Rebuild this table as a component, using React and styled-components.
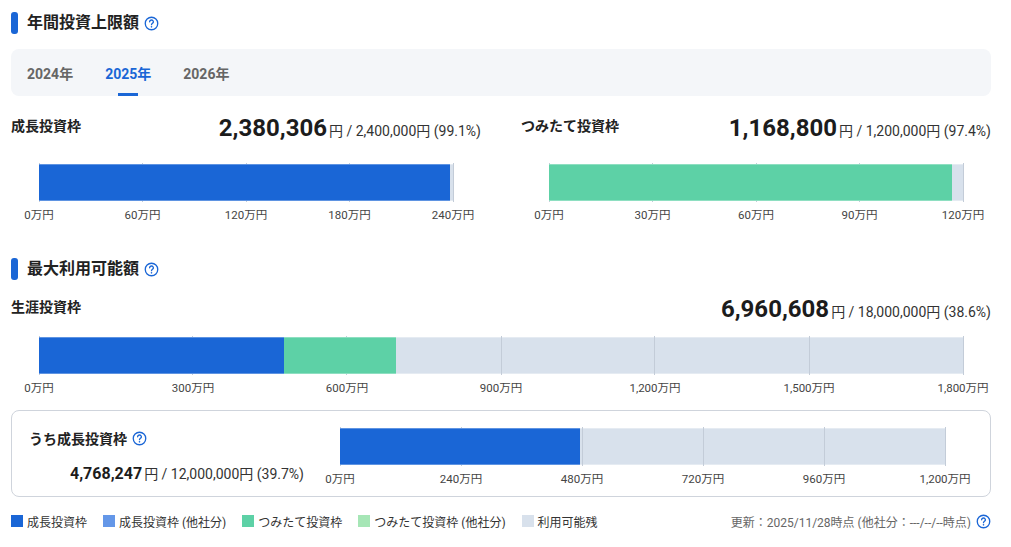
import React from "react";
import styled, { createGlobalStyle } from "styled-components";

const BLUE = "#1a66d6";
const BLUE_OTHER = "#6497e8";
const GREEN = "#5dd1a6";
const GREEN_OTHER = "#a6e6b6";
const REST = "#d8e1ec";

const GlobalStyle = createGlobalStyle`
  html, body {
    margin: 0;
    padding: 0;
    background: #fff;
  }
  body {
    font-family: Roboto, "Noto Sans CJK JP", "Noto Sans", sans-serif;
    color: #222;
  }
`;

function HelpIcon({ size = 15 }) {
  return (
    <HelpSvg width={size} height={size} viewBox="0 0 24 24" fill="none">
      <circle cx="12" cy="12" r="10" stroke={BLUE} strokeWidth="2.1" />
      <path
        d="M9 9.3a3 3 0 0 1 6 .2c0 2-3 2.4-3 4.4"
        stroke={BLUE}
        strokeWidth="2.1"
        strokeLinecap="round"
      />
      <circle cx="12" cy="17.3" r="1.3" fill={BLUE} />
    </HelpSvg>
  );
}

// segments without a colour are left see-through, so the bar's own
// background (and the grid lines) show in the unused part
function Chart({ max, segments, ticks, gap }) {
  return (
    <ChartWrap $gap={gap}>
      <Bar>
        {ticks.map((t, i) => (
          <GridLine
            key={t}
            style={{ left: `${(i / (ticks.length - 1)) * 100}%` }}
          />
        ))}
        {segments.map((s, i) => (
          <Segment
            key={i}
            $color={s.color}
            style={{ width: `${(s.value / max) * 100}%` }}
          />
        ))}
      </Bar>
      <Axis>
        {ticks.map((t, i) => (
          <Tick key={t} style={{ left: `${(i / (ticks.length - 1)) * 100}%` }}>
            {t}
          </Tick>
        ))}
      </Axis>
    </ChartWrap>
  );
}

function Amount({ big, rest, small }) {
  return (
    <AmountLine>
      <Big $small={small}>{big}</Big>
      <Rest>{rest}</Rest>
    </AmountLine>
  );
}

function App() {
  return (
    <Page>
      <GlobalStyle />
      <SectionTitle>
        <TitleMark />
        年間投資上限額
        <HelpIcon />
      </SectionTitle>

      <Tabs>
        <Tab>2024年</Tab>
        <Tab $active>2025年</Tab>
        <Tab>2026年</Tab>
      </Tabs>

      <Columns>
        <Column>
          <Header>
            <Label>成長投資枠</Label>
            <Amount big="2,380,306" rest="円 / 2,400,000円 (99.1%)" />
          </Header>
          <Chart
            gap={22}
            max={2400000}
            segments={[{ value: 2380306, color: BLUE }]}
            ticks={["0万円", "60万円", "120万円", "180万円", "240万円"]}
          />
        </Column>
        <Column>
          <Header>
            <Label>つみたて投資枠</Label>
            <Amount big="1,168,800" rest="円 / 1,200,000円 (97.4%)" />
          </Header>
          <Chart
            gap={22}
            max={1200000}
            segments={[{ value: 1168800, color: GREEN }]}
            ticks={["0万円", "30万円", "60万円", "90万円", "120万円"]}
          />
        </Column>
      </Columns>

      <SectionTitle $top={35}>
        <TitleMark />
        最大利用可能額
        <HelpIcon />
      </SectionTitle>

      <Lifetime>
        <Header>
          <Label>生涯投資枠</Label>
          <Amount big="6,960,608" rest="円 / 18,000,000円 (38.6%)" />
        </Header>
        <Chart
          gap={14}
          max={18000000}
          segments={[
            { value: 4768247, color: BLUE },
            { value: 2192361, color: GREEN },
          ]}
          ticks={[
            "0万円",
            "300万円",
            "600万円",
            "900万円",
            "1,200万円",
            "1,500万円",
            "1,800万円",
          ]}
        />
      </Lifetime>

      <Card>
        <CardInfo>
          <CardTitle>
            うち成長投資枠
            <HelpIcon />
          </CardTitle>
          <CardAmount>
            <Amount small big="4,768,247" rest="円 / 12,000,000円 (39.7%)" />
          </CardAmount>
        </CardInfo>
        <Chart
          gap={0}
          max={12000000}
          segments={[{ value: 4768247, color: BLUE }]}
          ticks={[
            "0万円",
            "240万円",
            "480万円",
            "720万円",
            "960万円",
            "1,200万円",
          ]}
        />
      </Card>

      <Footer>
        <Legend>
          <LegendItem>
            <Swatch $color={BLUE} />
            成長投資枠
          </LegendItem>
          <LegendItem>
            <Swatch $color={BLUE_OTHER} />
            成長投資枠 (他社分)
          </LegendItem>
          <LegendItem>
            <Swatch $color={GREEN} />
            つみたて投資枠
          </LegendItem>
          <LegendItem>
            <Swatch $color={GREEN_OTHER} />
            つみたて投資枠 (他社分)
          </LegendItem>
          <LegendItem>
            <Swatch $color={REST} />
            利用可能残
          </LegendItem>
        </Legend>
        <Updated>
          更新：2025/11/28時点 (他社分：---/--/--時点)
          <HelpIcon />
        </Updated>
      </Footer>
    </Page>
  );
}

const Page = styled.div`
  width: 980px;
  padding: 12px 20px 0 11px;
  display: flex;
  flex-direction: column;
`;

const SectionTitle = styled.h2`
  margin: ${(p) => p.$top || 0}px 0 0;
  height: 22px;
  display: flex;
  align-items: center;
  font-size: 16px;
  font-weight: 700;
  color: #222;
  line-height: 22px;

  svg {
    margin-left: 5px;
  }
`;

const TitleMark = styled.span`
  width: 7px;
  height: 22px;
  border-radius: 3px;
  background: ${BLUE};
  margin-right: 9px;
`;

const HelpSvg = styled.svg`
  flex: none;
  display: block;
`;

const Tabs = styled.div`
  margin-top: 15px;
  height: 47px;
  display: flex;
  background: #f4f6f9;
  border-radius: 8px;
`;

const Tab = styled.div`
  position: relative;
  padding: 0 16px;
  display: flex;
  align-items: center;
  font-size: 14px;
  font-weight: 700;
  color: ${(p) => (p.$active ? BLUE : "#666")};

  &::after {
    content: "";
    display: ${(p) => (p.$active ? "block" : "none")};
    position: absolute;
    left: 50%;
    bottom: 0;
    width: 20px;
    height: 3px;
    margin-left: -10px;
    background: ${BLUE};
  }
`;

const Columns = styled.div`
  margin-top: 18px;
  display: grid;
  grid-template-columns: 1fr 1fr;
  gap: 40px;
`;

const Column = styled.div`
  display: flex;
  flex-direction: column;
`;

const Lifetime = styled.div`
  margin-top: 15px;
  display: flex;
  flex-direction: column;
`;

const Header = styled.div`
  height: 28px;
  display: flex;
  align-items: center;
  justify-content: space-between;
`;

const Label = styled.div`
  font-size: 14px;
  font-weight: 700;
  color: #222;
  align-self: flex-start;
  line-height: 24px;
`;

const AmountLine = styled.div`
  display: flex;
  align-items: baseline;
  white-space: nowrap;
`;

const Big = styled.span`
  font-size: ${(p) => (p.$small ? 16 : 24)}px;
  font-weight: 700;
  color: #1c1c1c;
  margin-right: 2px;
`;

const Rest = styled.span`
  font-size: 14px;
  color: #333;
`;

const ChartWrap = styled.div`
  margin-top: ${(p) => p.$gap}px;
  padding: 0 28px;
  display: flex;
  flex-direction: column;
`;

const Bar = styled.div`
  position: relative;
  height: 37px;
  display: flex;
  background: ${REST};
  box-shadow: inset 0 1px 0 rgba(255, 255, 255, 0.35),
    inset 0 -1px 0 rgba(255, 255, 255, 0.35);
`;

const Segment = styled.div`
  position: relative;
  height: 100%;
  background: ${(p) => p.$color};
  flex: none;
  box-shadow: inset 0 1px 0 rgba(255, 255, 255, 0.3),
    inset 0 -1px 0 rgba(255, 255, 255, 0.3);
`;

const GridLine = styled.span`
  position: absolute;
  top: -1px;
  bottom: -1px;
  width: 1px;
  margin-left: -0.5px;
  background: #c3ccd8;
`;

const Axis = styled.div`
  position: relative;
  height: 16px;
  margin-top: 6px;
`;

const Tick = styled.span`
  position: absolute;
  top: 0;
  transform: translateX(-50%);
  font-size: 11.5px;
  line-height: 16px;
  color: #444;
  white-space: nowrap;
`;

const Card = styled.div`
  margin-top: 14px;
  border: 1px solid #cfd4dc;
  border-radius: 8px;
  padding: 17px 17px 9px;
  display: grid;
  grid-template-columns: 275px 1fr;
  gap: 8px;
`;

const CardInfo = styled.div`
  display: flex;
  flex-direction: column;
`;

const CardTitle = styled.div`
  height: 20px;
  display: flex;
  align-items: center;
  font-size: 14px;
  font-weight: 700;
  color: #222;

  svg {
    margin-left: 5px;
  }
`;

const CardAmount = styled.div`
  margin-top: 15px;
  display: flex;
  justify-content: flex-end;
`;

const Footer = styled.div`
  margin-top: 16px;
  height: 16px;
  display: flex;
  align-items: center;
  justify-content: space-between;
`;

const Legend = styled.div`
  display: flex;
  align-items: center;
  gap: 16px;
`;

const LegendItem = styled.div`
  display: flex;
  align-items: center;
  gap: 4px;
  font-size: 12px;
  color: #333;
`;

const Swatch = styled.span`
  width: 12px;
  height: 12px;
  background: ${(p) => p.$color};
`;

const Updated = styled.div`
  display: flex;
  align-items: center;
  gap: 5px;
  font-size: 12px;
  color: #666;
`;

export default App;
